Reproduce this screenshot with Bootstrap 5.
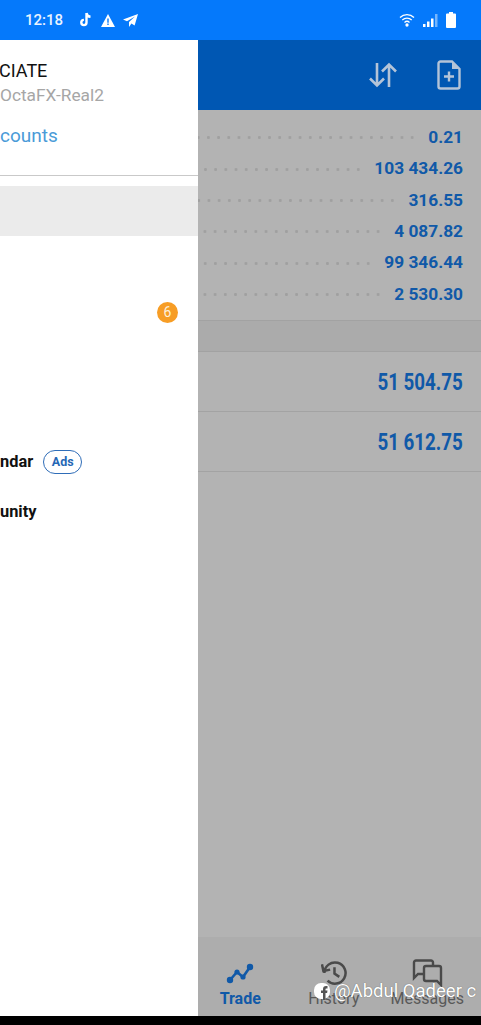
<!DOCTYPE html>
<html lang="en">
<head>
  <meta charset="UTF-8">
  <meta name="viewport" content="width=device-width, initial-scale=1">
  <title>Trade</title>
  <link href="https://cdn.jsdelivr.net/npm/bootstrap@5.3.0/dist/css/bootstrap.min.css" rel="stylesheet">
  <style>
    html, body { height: 100%; }
    body {
      width: 481px;
      height: 1025px;
      overflow: hidden;
      background: #000;
      font-family: Roboto, "Liberation Sans", sans-serif;
      position: relative;
    }
    .status-strip { height: 40px; background: #0579fb; color: #e9f3ff; padding: 0 25px 0 25px; font-size: 15px; font-weight: 500; }
    .screen { height: 976px; }
    .drawer { width: 198px; background: #fff; overflow: hidden; }
    .drawer-head { height: 136px; padding-top: 20px; border-bottom: 1px solid #c9c9c9; }
    .acct-name { font-size: 18px; line-height: 22px; color: #111; margin-left: -1px; }
    .acct-server { font-size: 17.3px; line-height: 22px; color: #a6a6a6; margin-top: 2px; }
    .acct-link { font-size: 19px; line-height: 24px; color: #4a9bd8; margin-top: 18px; }
    .drawer-sel { height: 50px; background: #ebebeb; margin-top: 10px; }
    .drawer-row { height: 50px; padding: 3px 20px 0 0; font-size: 16.4px; font-weight: 700; color: #111; }
    .count-pill { width: 21px; height: 21px; border-radius: 50%; background: #f79d25; color: #fdf0dc; font-size: 14px; font-weight: 400; }
    .ads-pill { width: 39px; height: 24px; margin: -1px 0 0 10px; border: 1.5px solid #2f6db8; border-radius: 12px; color: #2567b5; font-size: 12.5px; font-weight: 700; }
    .trade-pane { background: #b3b3b3; width: 283px; min-width: 0; }
    .app-strip { height: 70px; background: #0057b3; padding-right: 20px; gap: 39px; }
    .quote-list { padding-top: 12px; height: 210px; }
    .quote-row { height: 31.4px; padding-right: 18px; color: #1059a8; font-size: 17.3px; font-weight: 700; }
    .dot-lead { height: 3px; margin-right: 11px; background-image: radial-gradient(circle, #a0a0a0 1.3px, transparent 1.5px); background-size: 10.2px 3px; background-position: right center; }
    .group-strip { height: 32px; background: #ababab; border-top: 1px solid #a2a2a2; border-bottom: 1px solid #a2a2a2; }
    .price-row { height: 60px; padding: 4px 18px 0 0; border-bottom: 1px solid #a3a3a3; color: #1059a8; font-size: 23px; font-weight: 700; }
    .price-row span { display: inline-block; transform: scaleX(.815); transform-origin: right center; }
    .bottom-strip { height: 79px; background: #adadad; margin-top: auto; padding: 20px 7px 0 0; }
    .tab-item { flex: 0 0 93.5px; color: #595959; font-size: 16px; line-height: 20px; white-space: nowrap; }
    .tab-glyph { height: 32px; }
    .tab-active { color: #1059a8; font-weight: 700; }
    .watermark { position: absolute; left: 314px; top: 981px; color: #fff; font-size: 18.5px; line-height: 20px; white-space: nowrap; gap: 4px; text-shadow: 0 0 1px #555; }
  </style>
</head>
<body>
  <div class="status-strip d-flex align-items-center justify-content-between">
    <div class="d-flex align-items-center">
      <span>12:18</span>
      <svg class="ms-3" width="14" height="16" viewBox="0 0 14 16"><path d="M7.5 1v9.5a2.6 2.6 0 1 1-2.6-2.6M7.5 1c.3 2.2 1.800 3.600 4 3.800" fill="none" stroke="#fff" stroke-width="2.4"/></svg>
      <svg class="ms-2" width="14" height="13" viewBox="0 0 14 13"><path d="M7 0l7 13H0z" fill="#fff"/><path d="M6.3 4.5h1.4v4.2H6.3zM6.3 9.6h1.4v1.4H6.3z" fill="#0579fb"/></svg>
      <svg class="ms-2" width="15" height="13" viewBox="0 0 15 13"><path d="M15 0L0 5.5l4 1.8L12 2.5 6 8v5l2.4-3.4 3.2 1.9z" fill="#fff"/></svg>
    </div>
    <div class="d-flex align-items-center">
      <svg width="16" height="14" viewBox="0 0 16 14" fill="none" stroke="#fff" stroke-width="1.3"><path d="M1 4.5a10 10 0 0 1 14 0M3.3 7a7 7 0 0 1 9.4 0M5.5 9.5a3.6 3.6 0 0 1 5 0"/><circle cx="8" cy="12" r="1" fill="#fff"/></svg>
      <svg class="ms-2" width="15" height="13" viewBox="0 0 15 13"><path d="M0 10h2.5v3H0zM4 7.5h2.500V13H4zM8 4.500h2.500V13H8z" fill="#fff"/><path d="M12 0h2.500v13H12z" fill="#fff" opacity=".45"/></svg>
      <svg class="ms-2" width="10" height="16" viewBox="0 0 10 16"><path d="M3 0h4v1.500h2a1 1 0 0 1 1 1V15a1 1 0 0 1-1 1H1a1 1 0 0 1-1-1V2.500a1 1 0 0 1 1-1h2z" fill="#fff"/></svg>
    </div>
  </div>

  <div class="screen d-flex">
    <div class="drawer flex-shrink-0">
      <div class="drawer-head">
        <div class="acct-name">CIATE</div>
        <div class="acct-server">OctaFX-Real2</div>
        <div class="acct-link">counts</div>
      </div>
      <div class="drawer-sel"></div>
      <div class="drawer-row"></div>
      <div class="drawer-row d-flex align-items-center justify-content-end"><span class="count-pill d-flex align-items-center justify-content-center">6</span></div>
      <div class="drawer-row"></div>
      <div class="drawer-row"></div>
      <div class="drawer-row d-flex align-items-center">ndar<span class="ads-pill d-flex align-items-center justify-content-center">Ads</span></div>
      <div class="drawer-row d-flex align-items-center">unity</div>
    </div>

    <div class="trade-pane flex-shrink-0 d-flex flex-column">
      <div class="app-strip d-flex align-items-center justify-content-end">
        <svg width="30" height="26" viewBox="0 0 30 26" fill="none" stroke="#b4c4d8" stroke-width="2.6"><path d="M9 1v22M2 16.500l7 7 7-7M21 25V3M14 9.500l7-7 7 7"/></svg>
        <svg width="24" height="30" viewBox="0 0 24 30" fill="none" stroke="#b4c4d8" stroke-width="2.4"><path d="M15 1.500H3.500a2 2 0 0 0-2 2v23a2 2 0 0 0 2 2h17a2 2 0 0 0 2-2V9z"/><path d="M15 1.500V9h7.500z" fill="#b4c4d8" stroke="none"/><path d="M12 11.500v10M7 16.500h10"/></svg>
      </div>
      <div class="quote-list">
        <div class="quote-row d-flex align-items-center"><div class="dot-lead flex-grow-1"></div>0.21</div>
        <div class="quote-row d-flex align-items-center"><div class="dot-lead flex-grow-1"></div>103 434.26</div>
        <div class="quote-row d-flex align-items-center"><div class="dot-lead flex-grow-1"></div>316.55</div>
        <div class="quote-row d-flex align-items-center"><div class="dot-lead flex-grow-1"></div>4 087.82</div>
        <div class="quote-row d-flex align-items-center"><div class="dot-lead flex-grow-1"></div>99 346.44</div>
        <div class="quote-row d-flex align-items-center"><div class="dot-lead flex-grow-1"></div>2 530.30</div>
      </div>
      <div class="group-strip"></div>
      <div class="price-row d-flex align-items-center justify-content-end"><span>51 504.75</span></div>
      <div class="price-row d-flex align-items-center justify-content-end"><span>51 612.75</span></div>
      <div class="bottom-strip d-flex justify-content-end">
        <div class="tab-item tab-active d-flex flex-column align-items-center">
          <div class="tab-glyph d-flex align-items-center">
            <svg width="28" height="24" viewBox="0 0 28 24" fill="none" stroke="#1059a8" stroke-width="2.6"><path d="M4 19l7-8 6 5 7-10"/><circle cx="4" cy="19" r="3.200" fill="#1059a8" stroke="none"/><circle cx="11" cy="11" r="2.600" fill="#1059a8" stroke="none"/><circle cx="17" cy="16" r="2.600" fill="#1059a8" stroke="none"/><circle cx="24" cy="6" r="3.200" fill="#1059a8" stroke="none"/></svg>
          </div>
          Trade
        </div>
        <div class="tab-item d-flex flex-column align-items-center">
          <div class="tab-glyph d-flex align-items-center">
            <svg width="26" height="26" viewBox="0 0 27 27" fill="none" stroke="#4a4a4a" stroke-width="2.600"><path d="M3.500 13.500a11 11 0 1 1 3.300 7.900"/><path d="M1 4.500l1.500 7 7-1.500" /><path d="M14 7.500v6.500l5 3.500"/></svg>
          </div>
          History
        </div>
        <div class="tab-item d-flex flex-column align-items-center">
          <div class="tab-glyph d-flex align-items-center">
            <svg width="31" height="28" viewBox="0 0 31 28" fill="none" stroke="#4a4a4a" stroke-width="2.400"><path d="M21 7V3.500a2 2 0 0 0-2-2H4a2 2 0 0 0-2 2V19l4-4h6"/><path d="M14 7h13a2 2 0 0 1 2 2v17l-4-4H14a2 2 0 0 1-2-2V9a2 2 0 0 1 2-2z"/></svg>
          </div>
          Messages
        </div>
      </div>
    </div>
  </div>

  <div class="watermark d-flex align-items-center">
    <svg width="16" height="20" viewBox="0 0 16 20"><rect y="2" width="16" height="16" rx="7" fill="#fff"/><path d="M9 19v-7H7V9.500h2V8c0-2 1-3 3-3h1.500v2.500H12.500c-.8 0-1 .4-1 1v1h2l-.4 2.500h-1.600v7z" fill="#555"/></svg>
    <span>@Abdul Qadeer c</span>
  </div>
</body>
</html>
